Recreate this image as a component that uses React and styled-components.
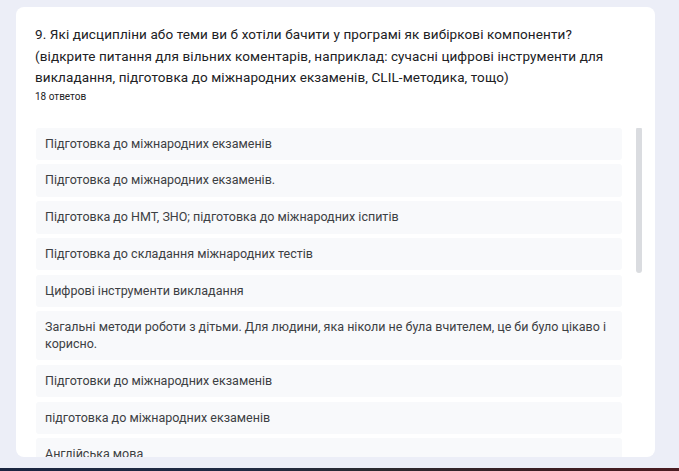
import React from "react";
import styled, { createGlobalStyle } from "styled-components";

const Global = createGlobalStyle`
  html, body { margin: 0; padding: 0; }
  body {
    background: #eceef7;
    font-family: Roboto, "Noto Sans", Arial, sans-serif;
    -webkit-font-smoothing: antialiased;
  }
  #root { height: 471px; overflow: hidden; }
`;

const Page = styled.div`
  height: 471px;
  display: flex;
  flex-direction: column;
  overflow: hidden;
`;

const Card = styled.section`
  margin: 7px 24px 0 16px;
  height: 450px;
  background: #ffffff;
  border-radius: 8px;
  overflow: hidden;
  display: flex;
  flex-direction: column;
  flex-shrink: 0;
`;

const Header = styled.header`
  padding: 17px 30px 0 19px;
`;

const Title = styled.h2`
  margin: 0;
  font-size: 13.5px;
  font-weight: 400;
  line-height: 21.5px;
  color: #202124;
  letter-spacing: 0.1px;
`;

const Count = styled.div`
  margin-top: 1px;
  font-size: 10px;
  line-height: 14px;
  color: #202124;
`;

const ListWrap = styled.div`
  margin-top: 24px;
  padding-left: 20px;
  display: flex;
  align-items: flex-start;
  flex: 1;
  min-height: 0;
  overflow: hidden;
`;

const Rows = styled.div`
  width: 586px;
  display: flex;
  flex-direction: column;
  gap: 4.3px;
`;

const Row = styled.div`
  background: #f8f9fb;
  border-radius: 3px;
  padding: 8px 9px;
  font-size: 12.5px;
  line-height: 16.5px;
  color: #3c4043;
`;

const Scrollbar = styled.div`
  margin: -1px 0 0 14px;
  width: 6px;
  height: 146px;
  border-radius: 3px;
  background: #dadce0;
  flex-shrink: 0;
`;

const Taskbar = styled.div`
  margin-top: auto;
  height: 3px;
  background: linear-gradient(90deg, #1a2540 0%, #1f2a44 35%, #2a2a30 55%, #3a1e24 80%, #4a1c22 100%);
`;

const answers = [
  "Підготовка до міжнародних екзаменів",
  "Підготовка до міжнародних екзаменів.",
  "Підготовка до НМТ, ЗНО; підготовка до міжнародних іспитів",
  "Підготовка до складання міжнародних тестів",
  "Цифрові інструменти викладання",
  "Загальні методи роботи з дітьми. Для людини, яка ніколи не була вчителем, це би було цікаво і корисно.",
  "Підготовки до міжнародних екзаменів",
  "підготовка до міжнародних екзаменів",
  "Англійська мова",
];

export default function App() {
  return (
    <Page>
      <Global />
      <Card>
        <Header>
          <Title>
            9. Які дисципліни або теми ви б хотіли бачити у програмі як вибіркові компоненти?
            <br />
            (відкрите питання для вільних коментарів, наприклад: сучасні цифрові інструменти для
            викладання, підготовка до міжнародних екзаменів, CLIL-методика, тощо)
          </Title>
          <Count>18 ответов</Count>
        </Header>
        <ListWrap>
          <Rows>
            {answers.map((a, i) => (
              <Row key={i}>{a}</Row>
            ))}
          </Rows>
          <Scrollbar />
        </ListWrap>
      </Card>
      <Taskbar />
    </Page>
  );
}
